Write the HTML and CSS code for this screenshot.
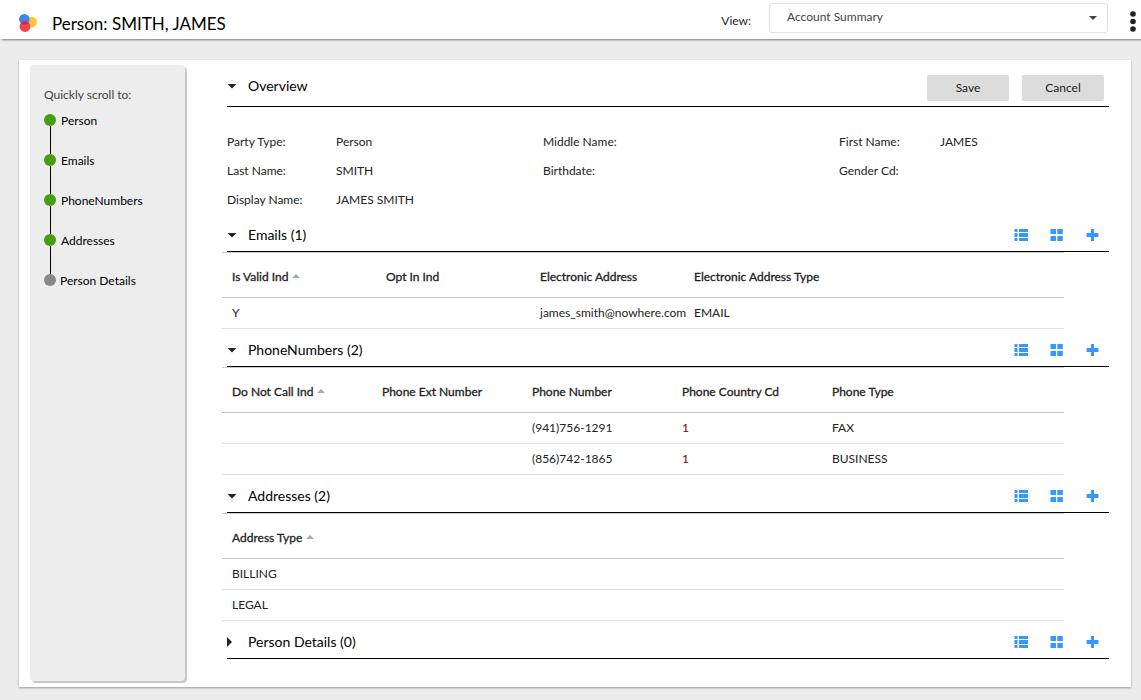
FILE: index.html
```
<!DOCTYPE html>
<html lang="en">
<head>
<meta charset="utf-8">
<title>Person: SMITH, JAMES</title>
<link rel="stylesheet" href="styles.css">
</head>
<body>
<svg class="sprite" aria-hidden="true">
  <symbol id="list" viewBox="0 0 14 12"><path d="M.5 0h3v3h-3zM5 0h9v3H5zM.5 4h3v4h-3zM5 4h9v4H5zM.5 9h3v3h-3zM5 9h9v3H5z"/></symbol>
  <symbol id="grid" viewBox="0 0 14 12"><path d="M.5 0H6v5H.5zM7.300 0h5.500v5H7.300zM.5 7H6v5H.5zM7.300 7h5.500v5H7.300z"/></symbol>
  <symbol id="plus" viewBox="0 0 14 12"><path d="M5 0h3v4h4l.5.500v3L12 8H8v4H5V8H1L.5 7.500v-3L1 4h4z"/></symbol>
</svg>
<header class="topbar">
  <svg class="logo" viewBox="0 0 18 18" aria-hidden="true">
    <circle cx="12.700" cy="8" r="5.300" fill="#ffc632"/>
    <circle cx="5.300" cy="5.300" r="5.300" fill="#3d86ea"/>
    <circle cx="6" cy="12.500" r="5.400" fill="#f4444f"/>
    <path d="M1.800 9.200Q6 5 10 9Q6 12.500 1.800 9.200z" fill="#c9304c"/>
  </svg>
  <h1 class="title">Person: SMITH, JAMES</h1>
  <label class="view-label" for="view">View:</label>
  <div class="select-wrap">
    <select id="view" class="select"><option>Account Summary</option></select>
    <svg class="caret" viewBox="0 0 8 4" aria-hidden="true"><path d="M0 0h8L4 4z"/></svg>
  </div>
  <button class="more" aria-label="More options"><svg viewBox="0 0 6 22"><circle cx="3" cy="3" r="2.800"/><circle cx="3" cy="10.500" r="2.800"/><circle cx="3" cy="18" r="2.800"/></svg></button>
</header>

<div class="card">
  <nav class="sidebar" aria-label="Quick scroll">
    <p class="nav-title">Quickly scroll to:</p>
    <ol class="steps">
      <li class="step"><a href="#overview">Person</a></li>
      <li class="step"><a href="#emails">Emails</a></li>
      <li class="step"><a href="#phones">PhoneNumbers</a></li>
      <li class="step"><a href="#addresses">Addresses</a></li>
      <li class="step step-off"><a href="#details">Person Details</a></li>
    </ol>
  </nav>

  <main class="main">
    <section id="overview">
      <div class="section-head overview-head">
        <button class="toggle" aria-expanded="true"><span class="arrow"></span>Overview</button>
        <div class="actions">
          <button class="btn">Save</button>
          <button class="btn">Cancel</button>
        </div>
      </div>
      <dl class="fields">
        <dt>Party Type:</dt><dd>Person</dd><dt>Middle Name:</dt><dd></dd><dt>First Name:</dt><dd>JAMES</dd>
        <dt>Last Name:</dt><dd>SMITH</dd><dt>Birthdate:</dt><dd></dd><dt>Gender Cd:</dt><dd></dd>
        <dt>Display Name:</dt><dd>JAMES SMITH</dd>
      </dl>
    </section>

    <section id="emails">
      <div class="section-head">
        <button class="toggle" aria-expanded="true"><span class="arrow"></span>Emails (1)</button>
        <div class="tools">
          <button class="tool" aria-label="List view"><svg><use href="#list"/></svg></button>
          <button class="tool" aria-label="Grid view"><svg><use href="#grid"/></svg></button>
          <button class="tool" aria-label="Add"><svg><use href="#plus"/></svg></button>
        </div>
      </div>
      <table class="table emails">
        <thead><tr><th class="sorted">Is Valid Ind</th><th>Opt In Ind</th><th>Electronic Address</th><th class="last">Electronic Address Type</th></tr></thead>
        <tbody><tr><td>Y</td><td></td><td>james_smith@nowhere.com</td><td>EMAIL</td></tr></tbody>
      </table>
    </section>

    <section id="phones">
      <div class="section-head">
        <button class="toggle" aria-expanded="true"><span class="arrow"></span>PhoneNumbers (2)</button>
        <div class="tools">
          <button class="tool" aria-label="List view"><svg><use href="#list"/></svg></button>
          <button class="tool" aria-label="Grid view"><svg><use href="#grid"/></svg></button>
          <button class="tool" aria-label="Add"><svg><use href="#plus"/></svg></button>
        </div>
      </div>
      <table class="table phones">
        <thead><tr><th class="sorted">Do Not Call Ind</th><th>Phone Ext Number</th><th>Phone Number</th><th>Phone Country Cd</th><th class="last">Phone Type</th></tr></thead>
        <tbody>
          <tr><td></td><td></td><td>(941)756-1291</td><td class="code">1</td><td>FAX</td></tr>
          <tr><td></td><td></td><td>(856)742-1865</td><td class="code">1</td><td>BUSINESS</td></tr>
        </tbody>
      </table>
    </section>

    <section id="addresses">
      <div class="section-head">
        <button class="toggle" aria-expanded="true"><span class="arrow"></span>Addresses (2)</button>
        <div class="tools">
          <button class="tool" aria-label="List view"><svg><use href="#list"/></svg></button>
          <button class="tool" aria-label="Grid view"><svg><use href="#grid"/></svg></button>
          <button class="tool" aria-label="Add"><svg><use href="#plus"/></svg></button>
        </div>
      </div>
      <table class="table">
        <thead><tr><th class="sorted last">Address Type</th></tr></thead>
        <tbody><tr><td>BILLING</td></tr><tr><td>LEGAL</td></tr></tbody>
      </table>
    </section>

    <section id="details">
      <div class="section-head">
        <button class="toggle" aria-expanded="false"><span class="arrow"></span>Person Details (0)</button>
        <div class="tools">
          <button class="tool" aria-label="List view"><svg><use href="#list"/></svg></button>
          <button class="tool" aria-label="Grid view"><svg><use href="#grid"/></svg></button>
          <button class="tool" aria-label="Add"><svg><use href="#plus"/></svg></button>
        </div>
      </div>
    </section>
  </main>
</div>
</body>
</html>
```
FILE: styles.css
```
* { box-sizing: border-box; }

body {
  margin: 0;
  background: #ececec;
  color: #222;
  font: 12px/16px "Futura PT", Futura, Lato, sans-serif;
}

button, select { font: inherit; color: inherit; }
button { border: 0; padding: 0; background: none; cursor: pointer; }
a { color: #000; text-decoration: none; }
.sprite { display: none; }

.topbar {
  display: flex;
  align-items: center;
  height: 39px;
  padding: 0 8px 0 19px;
  background: #fff;
  box-shadow: 2px 1px 2px #777;
}
.logo { width: 18px; height: 18px; margin-top: 6px; }
.title {
  margin: 8px auto 0 15px;
  color: #000;
  font-size: 17px;
  font-weight: 400;
  line-height: 24px;
}
.view-label { margin: 2px 18px 0 0; }
.select-wrap {
  display: flex;
  align-items: center;
  flex: 0 1 339px;
  height: 30px;
  margin-bottom: 3px;
  padding-right: 10px;
  border: 1px solid #e2e2e2;
  border-radius: 3px;
}
.select {
  flex: 1;
  height: 28px;
  padding: 0 0 3px 17px;
  border: 0;
  background: none;
  color: #444;
  appearance: none;
}
.caret { width: 8px; height: 4px; fill: #444; }
.more { width: 6px; height: 22px; margin: 4px -3px 0 22px; }
.more svg { display: block; width: 6px; height: 22px; fill: #222; }

.card {
  display: flex;
  margin: 21px 10px 13px 19px;
  padding: 0 22px 0 11px;
  background: #fff;
  box-shadow: 0 1px 2px #999;
}

.sidebar {
  flex: 0 0 155px;
  margin: 5px 37px 6px 0;
  padding: 22px 14px;
  border-radius: 4px;
  background: #ededed;
  box-shadow: 2px 2px 0 #c8c8c8;
}
.nav-title { margin: 0 0 10px; color: #444; }
.steps { margin: 0; padding: 0; list-style: none; }
.step { position: relative; display: flex; height: 40px; line-height: 16px; white-space: nowrap; }
.step::before {
  content: "";
  flex: none;
  width: 12px;
  height: 12px;
  margin: 1px 5px 0 0;
  border-radius: 50%;
  background: #459d11;
}
.step:not(:last-child)::after {
  content: "";
  position: absolute;
  top: 13px;
  left: 6px;
  width: 1px;
  height: 28px;
  background: #000;
}
.step-off::before { margin-right: 4px; background: #888; }

.main { flex: 1; min-width: 0; padding-bottom: 28px; }

.section-head {
  display: flex;
  align-items: center;
  justify-content: space-between;
  height: 38px;
  margin-left: 5px;
  padding-top: 5px;
  border-bottom: 1px solid #000;
}
.overview-head { height: 47px; padding: 6px 5px 0 0; }
.toggle {
  display: flex;
  align-items: center;
  color: #000;
  font-size: 14px;
  line-height: 20px;
}
.arrow {
  width: 10px;
  height: 5px;
  margin-right: 11px;
  background: #222;
  clip-path: polygon(0 0, 100% 0, 50% 100%);
}
.toggle[aria-expanded="false"] .arrow {
  width: 5px;
  height: 10px;
  margin-right: 16px;
  clip-path: polygon(0 0, 100% 50%, 0 100%);
}
.actions { display: flex; gap: 13px; padding-top: 4px; }
.btn { width: 82px; height: 26px; border-radius: 2px; background: #dcdcdc; }
.tools { display: flex; gap: 22px; padding-right: 9px; }
.tool { width: 14px; height: 12px; }
.tool svg { display: block; width: 14px; height: 12px; fill: #3398ff; }

.fields {
  display: grid;
  grid-template-columns: 109fr 207fr 104fr 192fr 101fr 169fr;
  margin: 0 0 0 5px;
  padding-top: 20px;
  line-height: 29px;
}
.fields dt { white-space: nowrap; }
.fields dd { margin: 0; }

.table {
  width: calc(100% - 45px);
  border-collapse: separate;
  border-spacing: 0;
  border-top: 1px solid #ccc;
  table-layout: fixed;
  text-align: left;
}
.table th, .table td { padding: 0 0 0 10px; white-space: nowrap; }
.table th { height: 45px; padding-top: 4px; border-bottom: 1px solid #c8c8c8; font-weight: 400; -webkit-text-stroke: 0.3px #222; }
.emails th { width: 154px; }
.phones th { width: 150px; }
.table .last { width: auto; }
.table td { height: 31px; border-bottom: 1px solid #e0e0e0; }
.table .code { color: #700; }
.sorted::after {
  content: "";
  display: inline-block;
  margin: 0 0 3px 4px;
  border: 4px solid transparent;
  border-top: 0;
  border-bottom-color: #aaa;
}
```
